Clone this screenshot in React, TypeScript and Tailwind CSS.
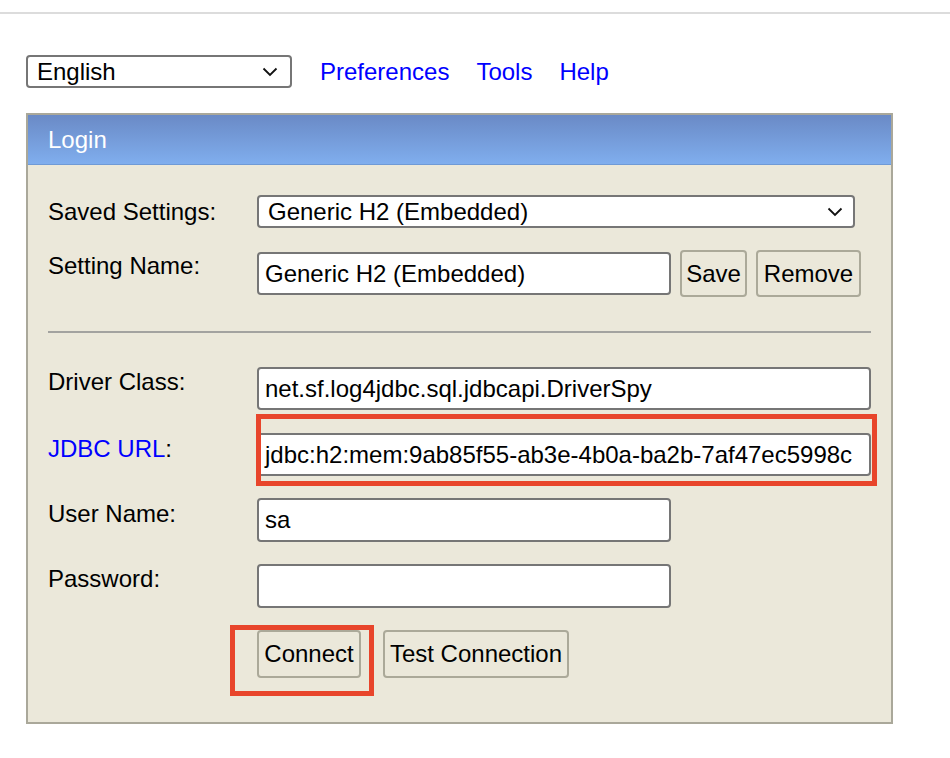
function Chevron() {
  return (
    <svg width="16" height="10" viewBox="0 0 16 10" className="shrink-0">
      <path d="M1.5 1.5 L8 8 L14.5 1.5" fill="none" stroke="#111" strokeWidth="1.8" />
    </svg>
  );
}

function FakeSelect({ value, className }: { value: string; className: string }) {
  return (
    <div
      className={`flex items-center justify-between rounded-[4px] border-2 border-[#767676] bg-white pl-[9px] pr-[10px] ${className}`}
    >
      <span className="leading-none">{value}</span>
      <Chevron />
    </div>
  );
}

function TextBox({ value, className }: { value?: string; className: string }) {
  return (
    <div
      className={`flex items-center rounded-[4px] border-2 border-[#767676] bg-white pl-[6px] ${className}`}
    >
      <span className="leading-none">{value}</span>
    </div>
  );
}

function Btn({ label, className }: { label: string; className: string }) {
  return (
    <div
      className={`flex items-center justify-center rounded-[4px] border-2 border-[#aba999] bg-[#ebe8da] ${className}`}
    >
      <span className="leading-none">{label}</span>
    </div>
  );
}

export default function App() {
  return (
    <div className="h-[758px] w-[950px] bg-white font-['Liberation_Sans',Arial,sans-serif] text-[24px] text-black">
      <div className="h-[12px]" />
      <div className="h-[2px] bg-[#dcdcdc]" />

      {/* language + links */}
      <div className="ml-[26px] mt-[41px] flex h-[33px] items-center">
        <FakeSelect value="English" className="h-[33px] w-[266px] pr-[12px]" />
        <div className="ml-[28px] flex gap-[27px] text-[#0000ff]">
          <span>Preferences</span>
          <span>Tools</span>
          <span>Help</span>
        </div>
      </div>

      {/* login panel */}
      <div className="ml-[26px] mt-[25px] h-[611px] w-[867px] border-2 border-[#aaa89a] bg-[#ebe8da]">
        <div className="flex h-[50px] items-center border-b border-[#6f9ad6] bg-gradient-to-b from-[#6a8ac6] to-[#80aeee] pl-[20px] text-white">
          Login
        </div>

        <div className="pl-[20px]">
          <div className="mt-[30px] flex h-[33px] items-center">
            <div className="w-[209px]">Saved Settings:</div>
            <FakeSelect value="Generic H2 (Embedded)" className="h-[33px] w-[598px]" />
          </div>

          <div className="mt-[22px] flex items-start">
            <div className="w-[209px] pt-[3px] leading-[26px]">Setting Name:</div>
            <TextBox value="Generic H2 (Embedded)" className="mt-[2px] h-[43px] w-[414px]" />
            <Btn label="Save" className="ml-[9px] h-[47px] w-[67px]" />
            <Btn label="Remove" className="ml-[9px] h-[47px] w-[105px]" />
          </div>

          <div className="mt-[34px] h-[2px] w-[823px] bg-[#a3a3a0]" />

          <div className="mt-[34px] flex items-start">
            <div className="w-[209px] pt-[2px] leading-[26px]">Driver Class:</div>
            <TextBox value="net.sf.log4jdbc.sql.jdbcapi.DriverSpy" className="h-[43px] w-[614px]" />
          </div>

          <div className="mt-[23px] flex items-start">
            <div className="w-[209px] pt-[3px] leading-[26px]">
              <span className="text-[#0000ff]">JDBC URL</span>:
            </div>
            <div className="relative">
              <TextBox
                value="jdbc:h2:mem:9ab85f55-ab3e-4b0a-ba2b-7af47ec5998c"
                className="h-[43px] w-[614px]"
              />
              <div className="absolute left-[-1px] top-[-19px] h-[72px] w-[621px] border-[5px] border-[#e8452b]" />
            </div>
          </div>

          <div className="mt-[22px] flex items-start">
            <div className="w-[209px] pt-[3px] leading-[26px]">User Name:</div>
            <TextBox value="sa" className="h-[44px] w-[414px]" />
          </div>

          <div className="mt-[22px] flex items-start">
            <div className="w-[209px] pt-[2px] leading-[26px]">Password:</div>
            <TextBox className="h-[44px] w-[414px]" />
          </div>

          <div className="mt-[22px] flex items-start pl-[209px]">
            <div className="relative">
              <Btn label="Connect" className="h-[48px] w-[104px]" />
              <div className="absolute left-[-27px] top-[-5px] h-[71px] w-[144px] border-[5px] border-[#e8452b]" />
            </div>
            <Btn label="Test Connection" className="ml-[22px] h-[48px] w-[186px]" />
          </div>
        </div>
      </div>
    </div>
  );
}
